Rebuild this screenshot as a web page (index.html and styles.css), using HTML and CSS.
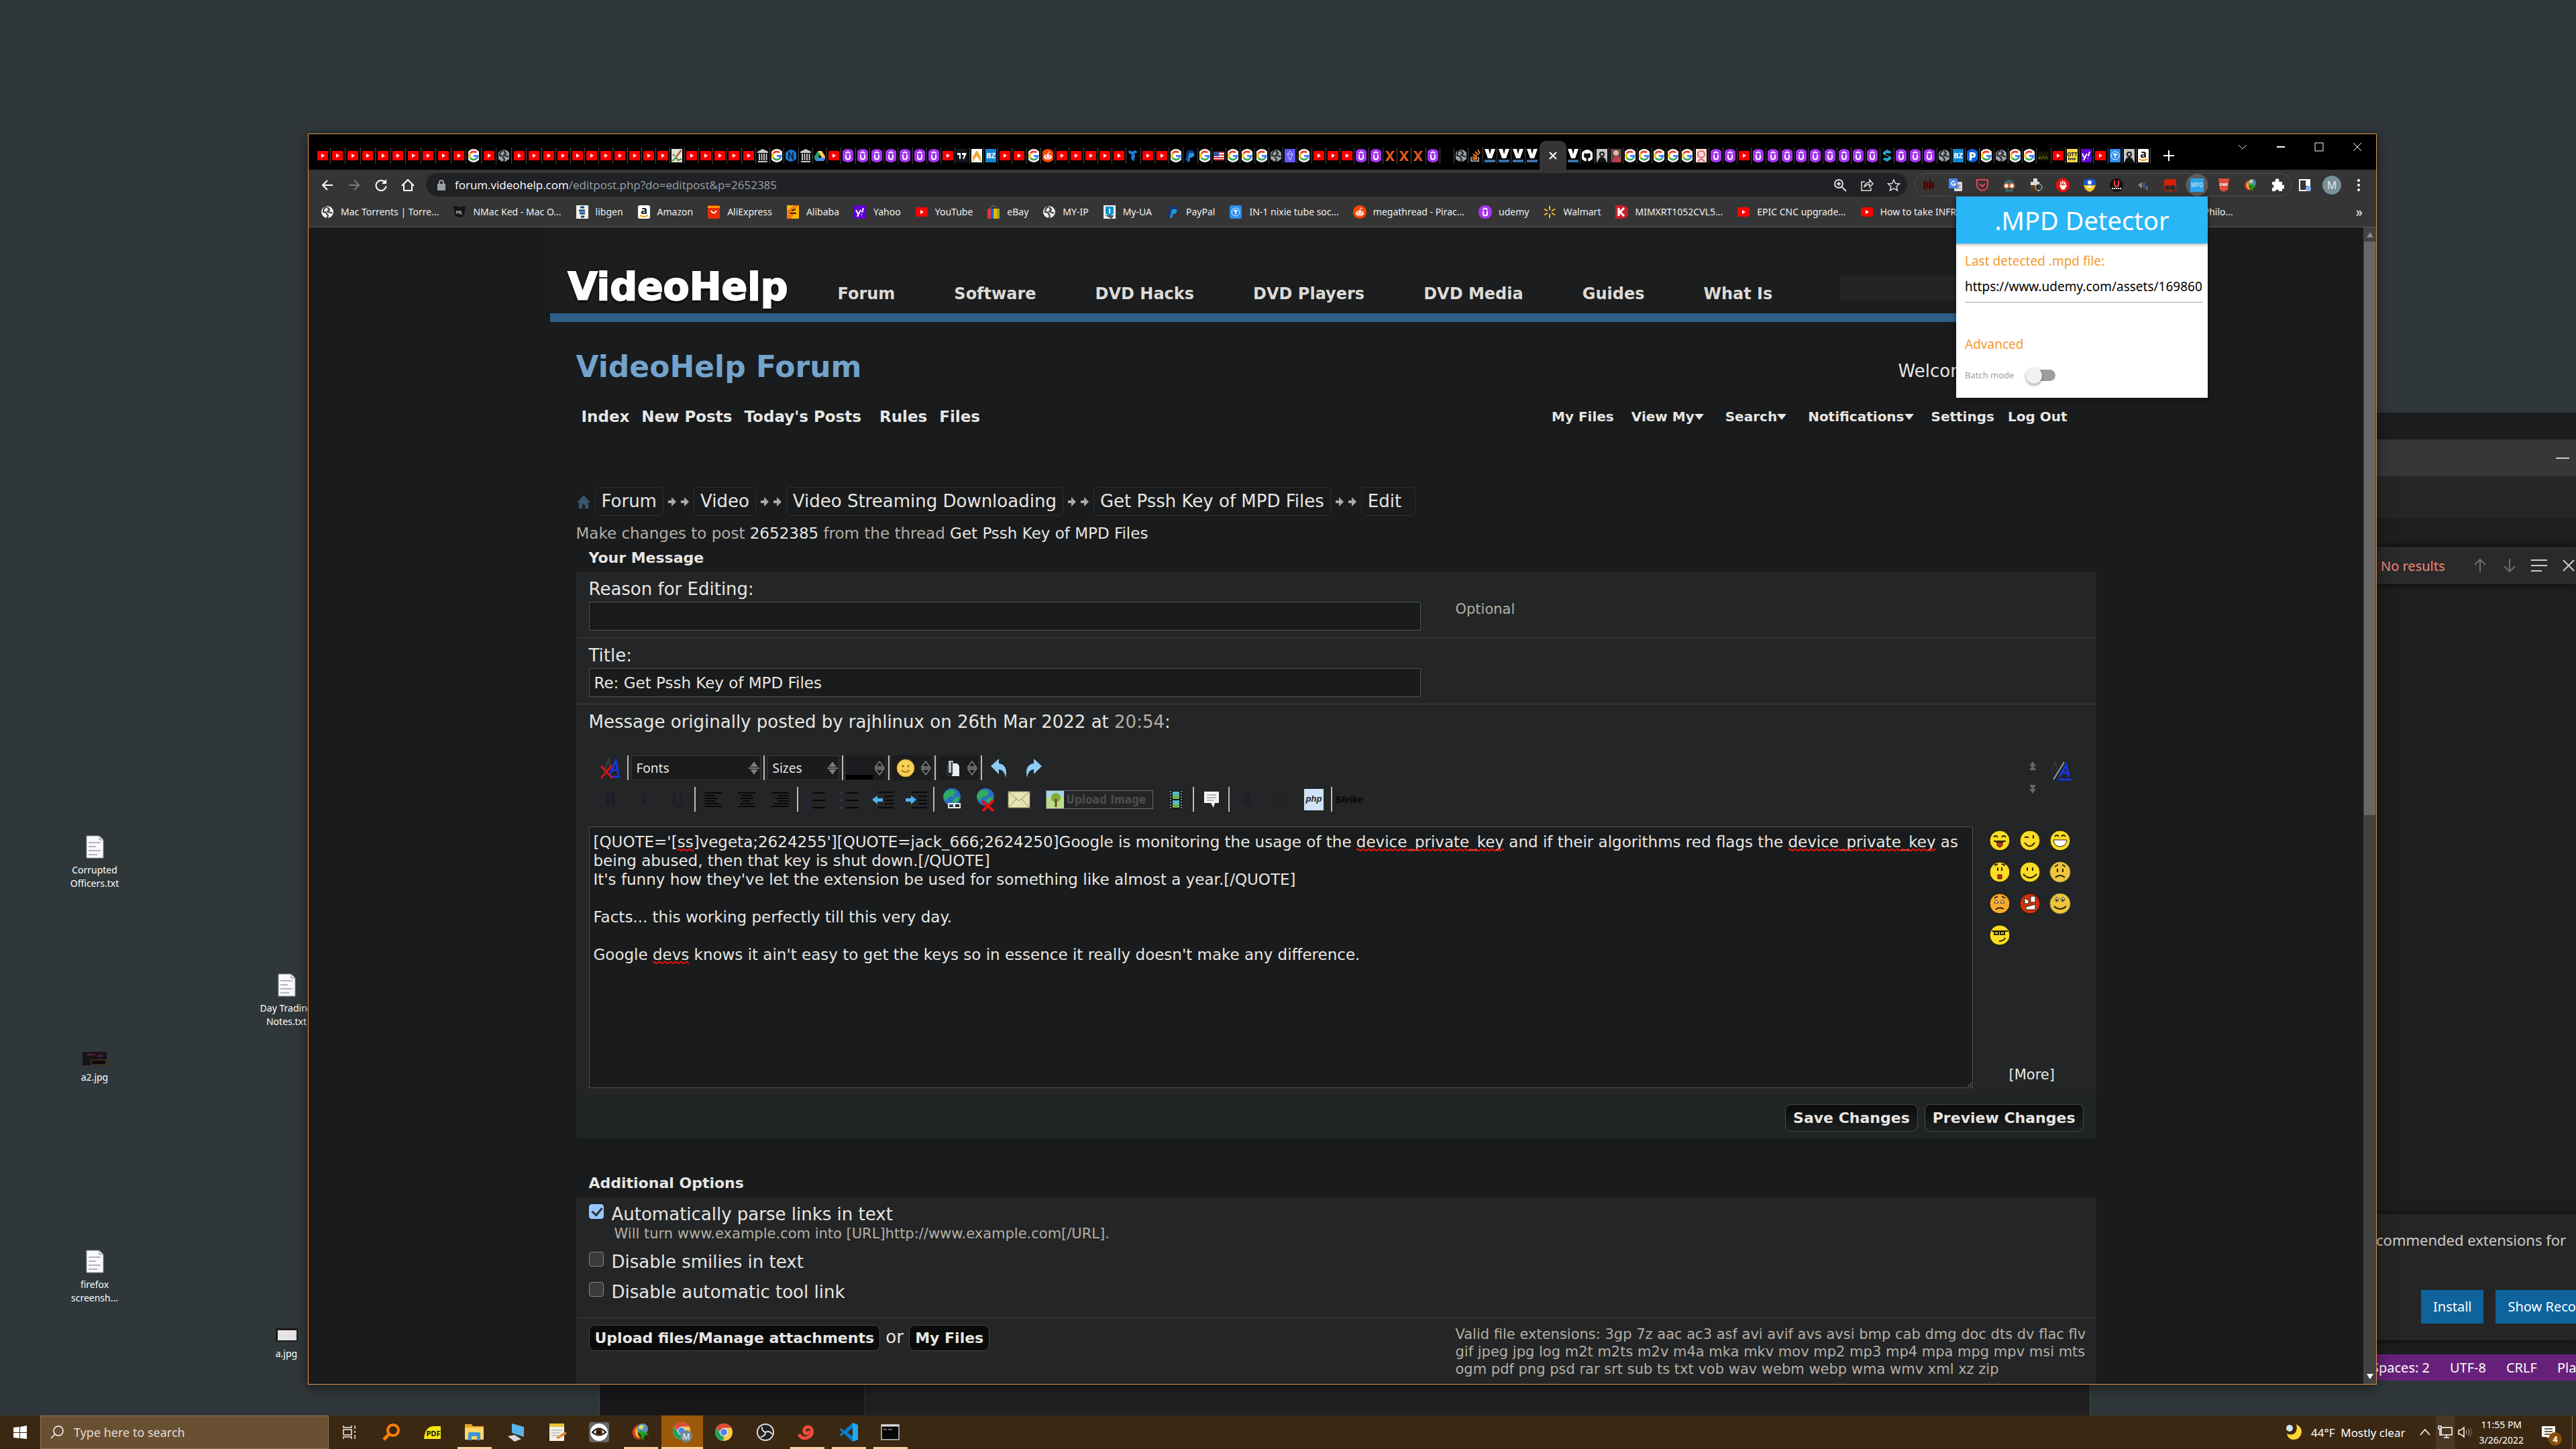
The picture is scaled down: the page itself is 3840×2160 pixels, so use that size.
FILE: index.html
```
<!DOCTYPE html>
<html lang="en">
<head>
    <meta charset="UTF-8">
    <meta name="viewport" content="width=device-width, initial-scale=1.0">
    <title>VideoHelp Forum - Edit Post</title>
    <link rel="stylesheet" href="styles.css">
</head>
<body>
    <!-- icon sheet -->
    <svg class="sprite" aria-hidden="true">
        <symbol id="i-yt" viewBox="0 0 20 20"><rect x="1" y="3" width="18" height="14" rx="3" fill="#f00"/><path d="M8 7l5 3-5 3z" fill="#fff"/></symbol>
        <symbol id="i-g" viewBox="0 0 20 20"><circle cx="10" cy="10" r="10" fill="#fff"/><g fill="none" stroke-width="3"><path d="M5 6.500A6 6 0 0 1 14 5.500" stroke="#ea4335"/><path d="M5 13.500A6 6 0 0 1 5 6.500" stroke="#fbbc05"/><path d="M14 14.500A6 6 0 0 1 5 13.500" stroke="#34a853"/><path d="M10 10.500h6a6 6 0 0 1-2 4" stroke="#4285f4"/></g></symbol>
        <symbol id="i-globe" viewBox="0 0 20 20"><circle cx="10" cy="10" r="9" fill="#9aa0a6"/><path d="M9 2c-3 1-5 4-5 8 3 0 5 1 5 3 0 1 2 1 2 3 0 1-1 2-2 3M11 2c-1 2 0 3 2 4 1 1-2 2-3 3 1 2 5 1 7 3" fill="none" stroke="#202124" stroke-width="2"/></symbol>
        <symbol id="i-globew" viewBox="0 0 20 20"><circle cx="10" cy="10" r="9" fill="#f1f1f1"/><path d="M9 2c-3 1-5 4-5 8 3 0 5 1 5 3 0 1 2 1 2 3 0 1-1 2-2 3M11 2c-1 2 0 3 2 4 1 1-2 2-3 3 1 2 5 1 7 3" fill="none" stroke="#353535" stroke-width="2"/></symbol>
        <symbol id="i-sketch" viewBox="0 0 20 20"><path d="M2 0h16v20H2z" fill="#dfe5cf"/><path d="M3 18l6-5 3 4 5-2M4 8l3 3" stroke="#4b8a3c" stroke-width="2" fill="none"/><path d="M16 1L9 10l-1 3 3-2 6-8z" fill="#c0392b"/></symbol>
        <symbol id="i-trash" viewBox="0 0 20 20"><path d="M2 4l8-4 8 4v2H2zM3 18h14v2H3z" fill="#c9c9c9"/><path d="M5 7v10M8.500 7v10M12 7v10M15.500 7v10" stroke="#c9c9c9" stroke-width="2"/></symbol>
        <symbol id="i-n" viewBox="0 0 20 20"><circle cx="10" cy="10" r="9" fill="#1878d0"/><path d="M7 15V5l6 10V5" stroke="#0b2745" stroke-width="2" fill="none"/></symbol>
        <symbol id="i-drive" viewBox="0 0 20 20"><path d="M7 3h6l-6 11-3 4-3-5z" fill="#1fa463"/><path d="M7 3h6l6 10h-6z" fill="#ffcf48"/><path d="M6 13h13l-3 5H4z" fill="#4688f4"/></symbol>
        <symbol id="i-ud" viewBox="0 0 20 20"><rect width="20" height="20" rx="9" fill="#a435f0"/><path d="M6.500 6.500L10 4.500l3.500 2" stroke="#fff" stroke-width="2" fill="none"/><path d="M7 8.500v4a3 3 0 0 0 6 0v-4" stroke="#fff" stroke-width="2" fill="none"/></symbol>
        <symbol id="i-tv" viewBox="0 0 20 20"><path d="M2 0h16v20H2z" fill="#131722"/><path d="M3 6h5v9H6V9H3zM10 6h7l-4 9h-2l2-6h-3z" fill="#fff"/></symbol>
        <symbol id="i-ay" viewBox="0 0 20 20"><path d="M2 0h16v20H2z" fill="#fff"/><path d="M4 14l6-10 6 10M4 18l6-10 6 10" stroke="#efa52b" stroke-width="2" fill="none"/></symbol>
        <symbol id="i-bz" viewBox="0 0 20 20"><path d="M2 0h16v20H2z" fill="#0f86d3"/><text x="10" y="14" font-size="11" font-weight="700" text-anchor="middle" fill="#fff">BZ</text></symbol>
        <symbol id="i-rd" viewBox="0 0 20 20"><circle cx="10" cy="10" r="10" fill="#ff4500"/><ellipse cx="10" cy="12" rx="6" ry="4" fill="#fff"/><circle cx="7.500" cy="11" r="1.200" fill="#ff4500"/><circle cx="12.500" cy="11" r="1.200" fill="#ff4500"/><path d="M10 8l1-4 3 1" stroke="#fff" fill="none"/><path d="M7.500 14q2.500 1 5 0" stroke="#ff4500" fill="none"/></symbol>
        <symbol id="i-tb" viewBox="0 0 20 20"><path d="M3 2l6 2 4-2 4 3-5 2 1 4-2 8-4-5 1-6-4-1z" fill="#1f7fd6"/></symbol>
        <symbol id="i-pp" viewBox="0 0 20 20"><path d="M6 2h6q4 0 4 4t-5 5H8l-1 6H3z" fill="#113a8c"/><path d="M9 6h6q2 1 1 4-1 3-5 3h-1l-1 6H6z" fill="#1f9bde"/></symbol>
        <symbol id="i-flag" viewBox="0 0 20 20"><path d="M1 4h18v13H1z" fill="#fff"/><path d="M1 5h18M1 9h18M1 13h18M1 16h18" stroke="#d3333c" stroke-width="2"/><path d="M1 4h9v7H1z" fill="#3b4ea0"/></symbol>
        <symbol id="i-dia" viewBox="0 0 20 20"><path d="M2 0h16v20H2z" fill="#6458f5"/><path d="M10 3l4 5-4 9-4-9zM6 8h8" stroke="#d6d2ff" fill="none"/></symbol>
        <symbol id="i-x" viewBox="0 0 20 20"><path d="M3 3h4l3 5 3-5h4l-5 7 5 8h-4l-3-5-3 5H3l5-8z" fill="#e2571e"/></symbol>
        <symbol id="i-so" viewBox="0 0 20 20"><path d="M4 12v6h11v-6" stroke="#9a9a9a" stroke-width="2" fill="none"/><path d="M6 15h7M6 12l7 1M7 8l6 3M10 4l5 5M14 1l3 6" stroke="#f48024" stroke-width="2"/></symbol>
        <symbol id="i-v" viewBox="0 0 20 20"><path d="M2 0h6l2 8 2-8h6l-5 14H7z" fill="#fff"/><path d="M2 16h16v4H2z" fill="#3b73a4"/></symbol>
        <symbol id="i-gh" viewBox="0 0 20 20"><circle cx="10" cy="10" r="9" fill="#fff"/><path d="M6 6l3 1h2l3-1 1 4q0 4-4 4l1 6H8l1-6q-4 0-4-4z" fill="#111"/></symbol>
        <symbol id="i-user" viewBox="0 0 20 20"><path d="M2 0h16v20H2z" fill="#c4c4c4"/><circle cx="10" cy="8" r="4" fill="#111"/><circle cx="10" cy="8" r="2" fill="#c4c4c4"/><path d="M3 20q2-8 7-8t7 8z" fill="#111"/></symbol>
        <symbol id="i-photo" viewBox="0 0 20 20"><path d="M2 0h16v20H2z" fill="#5f4b4a"/><circle cx="10" cy="6" r="4" fill="#e6b8a0"/><path d="M5 20q0-9 6-9t6 9z" fill="#c33c49"/></symbol>
        <symbol id="i-pink" viewBox="0 0 20 20"><path d="M2 0h16v20H2z" fill="#fbdcdc"/><circle cx="10" cy="8" r="5" fill="none" stroke="#d86a6a" stroke-width="2"/><path d="M5 19q5-7 10 0" fill="none" stroke="#d86a6a" stroke-width="2"/></symbol>
        <symbol id="i-s" viewBox="0 0 20 20"><path d="M10 1l7 4-4 2-3-1-3 2 9 4v3l-6 4-7-4 4-2 3 1 3-2-9-4V5z" fill="#2ba8cf"/></symbol>
        <symbol id="i-p" viewBox="0 0 20 20"><circle cx="10" cy="10" r="10" fill="#1463d8"/><path d="M6 17V5h5q4 0 4 4t-4 4H9v4z" fill="#fff"/><circle cx="10.500" cy="9" r="1.500" fill="#1463d8"/></symbol>
        <symbol id="i-game" viewBox="0 0 20 20"><path d="M2 4h16v13H2z" fill="#1b1606"/><path d="M3 15v-3l2 3v-4l3 4 2-5 2 5 3-4 1 4" stroke="#5c7a12" fill="none"/></symbol>
        <symbol id="i-ott" viewBox="0 0 20 20"><path d="M2 0h16v20H2z" fill="#f8d948"/><text x="10" y="11" font-size="8" font-weight="700" text-anchor="middle" fill="#222">OTT</text><path d="M4 15h12" stroke="#222" stroke-width="3" stroke-dasharray="2 1"/></symbol>
        <symbol id="i-yh" viewBox="0 0 20 20"><path d="M1 0h18v20H1z" fill="#6001d2"/><path d="M4 7l3 6M11 7l-5 10" stroke="#fff" stroke-width="2"/><path d="M15 4l-2 7M12 14h1" stroke="#fff" stroke-width="2"/></symbol>
        <symbol id="i-ti" viewBox="0 0 20 20"><rect x="1" width="18" height="20" rx="3" fill="#2b8df2"/><circle cx="10" cy="10" r="6" fill="none" stroke="#fff"/><path d="M7 8h6M10 8v5" stroke="#fff" stroke-width="2"/></symbol>
        <symbol id="i-amz" viewBox="0 0 20 20"><rect x="1" width="18" height="20" rx="3" fill="#fff"/><text x="10" y="13" font-size="16" font-weight="700" text-anchor="middle" fill="#111">a</text><path d="M4 15q6 4 12 0" stroke="#f90" stroke-width="2" fill="none"/></symbol>
        <symbol id="i-nmac" viewBox="0 0 20 20"><circle cx="4" cy="4" r="3" fill="#151515"/><circle cx="16" cy="4" r="3" fill="#151515"/><circle cx="10" cy="10" r="8" fill="#151515"/><path d="M6 13V8l2 3 2-3v5M12 8v5h2" stroke="#ddd" fill="none"/></symbol>
        <symbol id="i-lib" viewBox="0 0 20 20"><path d="M1 0h18v20H1z" fill="#f3f2e6"/><path d="M7 3h6M5 8h9M6 12h8M8 17h5" stroke="#134a8e" stroke-width="3"/></symbol>
        <symbol id="i-ali" viewBox="0 0 20 20"><rect x="1" width="18" height="20" rx="2" fill="#e62e04"/><path d="M1 1h18v3H1z" fill="#f90"/><path d="M6 8q4 7 8 0" stroke="#fff" stroke-width="2" fill="none"/></symbol>
        <symbol id="i-baba" viewBox="0 0 20 20"><path d="M1 0h18v20H1z" fill="#ffb800"/><path d="M1 20V8L12 0h7L8 9l6 1-7 10z" fill="#ff7a00"/><path d="M6 12h9M8 8l6-2" stroke="#222" stroke-width="2"/></symbol>
        <symbol id="i-ebay" viewBox="0 0 20 20"><path d="M6 6q0-5 4-5t4 5" stroke="#555" stroke-width="2" fill="none"/><path d="M1 5h5v15H1z" fill="#e53238"/><path d="M6 5h4v15H6z" fill="#0064d2"/><path d="M10 5h5v15h-5z" fill="#f5af02"/><path d="M15 5h4v15h-4z" fill="#86b817"/></symbol>
        <symbol id="i-ua" viewBox="0 0 20 20"><path d="M1 0h18v20H1z" fill="#f4f4f4"/><path d="M4 2v9q0 4 6 4t6-4V2" fill="#0d94c9"/><path d="M10 5v7" stroke="#fff" stroke-width="2"/><path d="M3 15h14l-4 5z" fill="#555"/></symbol>
        <symbol id="i-wm" viewBox="0 0 20 20"><path d="M10 1v6M10 13v6M2 5.500l5 3M13 11.500l5 3M2 14.500l5-3M13 8.500l5-3" stroke="#ffc220" stroke-width="2"/></symbol>
        <symbol id="i-k" viewBox="0 0 20 20"><path d="M1 0h10a10 10 0 0 1 0 20H1z" fill="#c8202c"/><path d="M6 4v12M14 4l-6 6 6 6" stroke="#fff" stroke-width="3" fill="none"/></symbol>
        <symbol id="i-chrome" viewBox="0 0 28 28"><circle cx="14" cy="14" r="13" fill="#fbc94b"/><path d="M2.700 7.500L9 17l5 3-1 7A13 13 0 0 1 2.700 7.500z" fill="#25a05a"/><path d="M2.700 7.500A13 13 0 0 1 25.300 7.500H14l-6 6z" fill="#db4a3e"/><circle cx="14" cy="14" r="6" fill="#fff"/><circle cx="14" cy="14" r="5" fill="#4a86ee"/></symbol>
        <symbol id="i-idm" viewBox="0 0 28 28"><path d="M12 2Q0 7 2 17q3 9 13 8-9-4-8-11 1-8 5-12z" fill="#e33b22"/><path d="M14 3Q4 8 6 16q2 7 9 7-6-4-5-10 1-6 4-10z" fill="#f2c514"/><circle cx="17" cy="9" r="8" fill="#5f8fb5"/><path d="M12 4q5-2 7 1l-3 5-5-1z" fill="#cfe070"/><path d="M12 11l15 6-7 2-3 8z" fill="#1aa51a"/></symbol>
        <symbol id="i-doc" viewBox="0 0 27 35"><path d="M1 1h19l6 6v27H1z" fill="#fafafa" stroke="#8d8f90"/><path d="M20 1v6h6" fill="#e4e4e4" stroke="#8d8f90"/><path d="M4 11h18M4 17h11M4 23h18M4 29h13" stroke="#b4b6b8" stroke-width="2"/></symbol>
        <symbol id="i-spin" viewBox="0 0 17 22"><path d="M2 9l6-8 6 8zM2 13l6 8 6-8z" fill="none" stroke="#7d7d7d" stroke-width="1.500"/><path d="M1 11h15" stroke="#7d7d7d" stroke-width="1.500"/></symbol>
        <symbol id="i-arrow" viewBox="0 0 14 18"><path d="M1 7h5V2l7 7-7 7v-5H1z" fill="#a9a9a9"/></symbol>
        <symbol id="i-earth" viewBox="0 0 32 36"><circle cx="16" cy="14" r="13" fill="#2b6fc4"/><path d="M8 5q8-4 13 1l-3 7-7 1-4 6q-4-5-4-9zM20 15l7-1q-1 8-7 10l-3-4z" fill="#2fae5b"/></symbol>
    </svg>

    <main class="desktop">
        <div class="shortcut s1"><svg width="27" height="35"><use href="#i-doc"/></svg><span>Corrupted<br>Officers.txt</span></div>
        <div class="shortcut s2"><svg width="27" height="35"><use href="#i-doc"/></svg><span>Day Trading<br>Notes.txt</span></div>
        <div class="shortcut s3"><svg width="38" height="35"><path d="M1 14h36v20H1z" fill="#17141a"/><path d="M8 18h12M24 20h8" stroke="#4a2136" stroke-width="3"/><path d="M14 26h22v7H14z" fill="#0c0c0c" stroke="#6b4a20"/></svg><span>a2.jpg</span></div>
        <div class="shortcut s4"><svg width="27" height="35"><use href="#i-doc"/></svg><span>firefox<br>screensh...</span></div>
        <div class="shortcut s5"><svg width="38" height="35"><path d="M3 14h33v20H3z" fill="#1c1a1a"/><path d="M6 17h28v15H6z" fill="#e6e4e4"/></svg><span>a.jpg</span></div>

        <!-- window that shows only under the browser -->
        <div class="explorer"><div class="explorer-nav"></div></div>

        <section class="vscode">
            <div class="vs-top"></div>
            <div class="vs-title"><svg width="24" height="24"><path d="M2 12h20" stroke="#ccc" stroke-width="2"/></svg></div>
            <div class="vs-menu"></div>
            <div class="vs-tabs"></div>
            <div class="vs-find">
                <span>No results</span>
                <svg width="26" height="26"><path d="M13 23V4M5 12l8-8 8 8" fill="none" stroke="#6d6d6d" stroke-width="2"/></svg>
                <svg width="26" height="26"><path d="M13 3v19M5 14l8 8 8-8" fill="none" stroke="#6d6d6d" stroke-width="2"/></svg>
                <svg width="26" height="26"><path d="M1 5h24M1 13h24M1 21h16" stroke="#ccc" stroke-width="2"/></svg>
                <svg width="26" height="26"><path d="M5 5l16 16M21 5L5 21" stroke="#ccc" stroke-width="2"/></svg>
            </div>
            <div class="vs-editor"></div>
            <div class="vs-notice">
                <p>recommended extensions for</p>
                <div class="vs-actions"><button type="button">Install</button><button type="button">Show Recommendations</button></div>
            </div>
            <div class="vs-status"><span>Spaces: 2</span><span>UTF-8</span><span>CRLF</span><span>Plain Text</span></div>
        </section>

        <section class="browser">
            <div class="tabstrip">
                <div class="tabs tabs-a" id="tabs-a"></div>
                <div class="tabs tabs-b" id="tabs-b"></div>
                <div class="tab-active"><svg width="12" height="12"><path d="M1 1l10 10M11 1L1 11" stroke="#fff" stroke-width="2"/></svg></div>
                <div class="tabs tabs-c" id="tabs-c"></div>
                <button type="button" class="newtab" aria-label="New tab"><svg width="18" height="18"><path d="M9 1v16M1 9h16" stroke="#fff" stroke-width="2"/></svg></button>
                <div class="controls">
                    <button type="button" aria-label="Search tabs"><svg width="14" height="14"><path d="M1 4l6 6 6-6" fill="none" stroke="#ddd"/></svg></button>
                    <button type="button" aria-label="Minimize"><svg width="14" height="14"><path d="M1 7h12" stroke="#fff" stroke-width="2"/></svg></button>
                    <button type="button" aria-label="Maximize"><svg width="14" height="14"><path d="M1 1h12v12H1z" fill="none" stroke="#fff"/></svg></button>
                    <button type="button" aria-label="Close"><svg width="14" height="14"><path d="M1 1l12 12M13 1L1 13" stroke="#fff"/></svg></button>
                </div>
            </div>

            <div class="toolbar">
                <div class="address-row">
                    <button type="button" aria-label="Back"><svg width="20" height="20"><path d="M18 10H3M10 3l-7 7 7 7" fill="none" stroke="#fff" stroke-width="2"/></svg></button>
                    <button type="button" aria-label="Forward"><svg width="20" height="20"><path d="M2 10h15M10 3l7 7-7 7" fill="none" stroke="#7c7c7c" stroke-width="2"/></svg></button>
                    <button type="button" aria-label="Reload"><svg width="20" height="20"><path d="M16 6a7.500 7.500 0 1 0 1.500 5.500" fill="none" stroke="#fff" stroke-width="2"/><path d="M18 1v7h-7z" fill="#fff"/></svg></button>
                    <button type="button" aria-label="Home"><svg width="20" height="20"><path d="M4 9v9h12V9M1 11l9-9 9 9" fill="none" stroke="#fff" stroke-width="2"/></svg></button>
                    <div class="omnibox">
                        <svg width="14" height="18"><path d="M1 7h12v10H1z" fill="#9aa0a6"/><path d="M4 8V5a3 3 0 0 1 6 0v3" fill="none" stroke="#9aa0a6" stroke-width="2"/></svg>
                        <span class="url">forum.videohelp.com<span>/editpost.php?do=editpost&amp;p=2652385</span></span>
                        <svg width="20" height="20"><circle cx="8" cy="8" r="6" fill="none" stroke="#ddd" stroke-width="2"/><path d="M13 13l6 6M5 8h6M8 5v6" stroke="#ddd" stroke-width="2"/></svg>
                        <svg width="20" height="20"><path d="M7 5H2v13h14v-4M6 13q1-7 8-7V2l5 6-5 5v-4q-5 0-8 4z" fill="none" stroke="#ddd" stroke-width="1.500"/></svg>
                        <svg width="20" height="20"><path d="M10 2l2.500 5.500 6 .5-4.500 4 1.500 6-5.500-3.200L4.500 18 6 12 1.500 8l6-.5z" fill="none" stroke="#ddd" stroke-width="1.500"/></svg>
                    </div>
                    <div class="extensions">
                        <span><svg width="20" height="20"><path d="M2 6v8M6 2v16M10 5v10M14 3v14M18 7v6" stroke="#7a0d0d" stroke-width="2"/><path d="M4 4v12M8 6v8M12 2v14M16 6v9" stroke="#111" stroke-width="2"/></svg></span>
                        <span><svg width="20" height="20"><rect x="8" y="5" width="12" height="14" rx="1" fill="#dcdcdc"/><rect width="13" height="15" rx="1" fill="#4a86ee"/><path d="M9 5a3 3 0 1 0 1 3H7" fill="none" stroke="#fff" stroke-width="1.500"/><path d="M12 10h6M15 9v2l-3 5M13 12l5 4" stroke="#666" fill="none"/></svg></span>
                        <span><svg width="20" height="20"><path d="M2 2h16v8a8 8 0 0 1-16 0z" fill="none" stroke="#ef4056" stroke-width="2"/><path d="M6 8l4 4 4-4" fill="none" stroke="#ef4056" stroke-width="2"/></svg></span>
                        <span><svg width="20" height="20"><path d="M2 10a8 8 0 0 1 16 0z" fill="#2d6b7a"/><circle cx="6" cy="11" r="3.500" fill="#fff" stroke="#c76b3c" stroke-width="2"/><circle cx="14" cy="11" r="3.500" fill="#fff" stroke="#c76b3c" stroke-width="2"/><path d="M5 18h10" stroke="#2d8a9a" stroke-width="3" stroke-dasharray="3 1"/></svg></span>
                        <span><svg width="20" height="20"><path d="M6 0h6v5h3v14H2V5h4z" fill="#ddd"/><path d="M2 10h11v9H2z" fill="#5a3b1e"/><circle cx="14" cy="13" r="5" fill="#333" stroke="#ddd"/></svg></span>
                        <span><svg width="20" height="20"><path d="M6 0h8l6 6v8l-6 6H6l-6-6V6z" fill="#e3120b"/><path d="M7 10V5M9.500 9V3M12 9V4M14 11V6M6 11l3 5h3l3-5z" stroke="#fff" stroke-width="1.500" fill="#fff"/></svg></span>
                        <span><svg width="20" height="20"><path d="M1 2l9-2 9 2v8q-2 8-9 10-7-2-9-10z" fill="#1a56c8"/><path d="M1 10h18q-2 8-9 10-7-2-9-10z" fill="#f5c518"/><circle cx="10" cy="6" r="3" fill="#fff"/><path d="M5 14q5-7 10 0z" fill="#fff"/></svg></span>
                        <span><svg width="20" height="20"><circle cx="10" cy="10" r="10" fill="#161010"/><path d="M7 3v6a3 3 0 0 0 6 0V3" fill="none" stroke="#e44" stroke-width="2"/><path d="M3 15h14" stroke="#eee" stroke-width="2" stroke-dasharray="2 1"/></svg></span>
                        <span><svg width="20" height="20"><path d="M2 10l6-5v10z" fill="#888"/><path d="M11 6v8" stroke="#3c6fb0" stroke-width="2"/><path d="M15 11v6" stroke="#666" stroke-width="3"/></svg></span>
                        <span><svg width="20" height="20"><rect x="1" y="1" width="18" height="18" rx="4" fill="#d7200a"/><circle cx="6" cy="14" r="4" fill="#2b2b2b"/><circle cx="14" cy="14" r="4" fill="#2b2b2b"/></svg></span>
                        <span class="on"><svg width="20" height="20"><path d="M0 0h20v20H0z" fill="#29a4ec"/><text x="10" y="13" font-size="8" text-anchor="middle" fill="#d9f0ff">MPD</text></svg></span>
                        <span><svg width="20" height="20"><path d="M2 0h16l-2 17-6 3-6-3z" fill="#dd4b39"/><text x="10" y="11" font-size="6" font-weight="700" text-anchor="middle" fill="#fff">EME</text></svg></span>
                        <span><svg width="20" height="20"><use href="#i-idm"/></svg></span>
                        <span><svg width="20" height="20"><path d="M2 5h5a3 3 0 1 1 5 0h5v5a3 3 0 1 1 0 5v4h-5a2.500 2.500 0 1 0-5 0H2v-5a2.500 2.500 0 1 0 0-5z" fill="#fff"/></svg></span>
                    </div>
                    <button type="button" aria-label="Side panel"><svg width="20" height="20"><path d="M2 2h15v16H2z" fill="none" stroke="#fff" stroke-width="2"/><path d="M11 2h6v9h-6z" fill="#fff"/><circle cx="15" cy="15" r="4" fill="#8ab4f8"/></svg></button>
                    <span class="avatar">M</span>
                    <button type="button" aria-label="Menu"><svg width="20" height="20"><circle cx="10" cy="3" r="2" fill="#fff"/><circle cx="10" cy="10" r="2" fill="#fff"/><circle cx="10" cy="17" r="2" fill="#fff"/></svg></button>
                </div>
                <nav class="bookmarks">
                    <a href="#"><svg width="20" height="20"><use href="#i-globew"/></svg>Mac Torrents | Torre...</a>
                    <a href="#"><svg width="20" height="20"><use href="#i-nmac"/></svg>NMac Ked - Mac O...</a>
                    <a href="#"><svg width="20" height="20"><use href="#i-lib"/></svg>libgen</a>
                    <a href="#"><svg width="20" height="20"><use href="#i-amz"/></svg>Amazon</a>
                    <a href="#"><svg width="20" height="20"><use href="#i-ali"/></svg>AliExpress</a>
                    <a href="#"><svg width="20" height="20"><use href="#i-baba"/></svg>Alibaba</a>
                    <a href="#"><svg width="20" height="20"><use href="#i-yh"/></svg>Yahoo</a>
                    <a href="#"><svg width="20" height="20"><use href="#i-yt"/></svg>YouTube</a>
                    <a href="#"><svg width="20" height="20"><use href="#i-ebay"/></svg>eBay</a>
                    <a href="#"><svg width="20" height="20"><use href="#i-globew"/></svg>MY-IP</a>
                    <a href="#"><svg width="20" height="20"><use href="#i-ua"/></svg>My-UA</a>
                    <a href="#"><svg width="20" height="20"><use href="#i-pp"/></svg>PayPal</a>
                    <a href="#"><svg width="20" height="20"><use href="#i-ti"/></svg>IN-1 nixie tube soc...</a>
                    <a href="#"><svg width="20" height="20"><use href="#i-rd"/></svg>megathread - Pirac...</a>
                    <a href="#"><svg width="20" height="20"><use href="#i-ud"/></svg>udemy</a>
                    <a href="#"><svg width="20" height="20"><use href="#i-wm"/></svg>Walmart</a>
                    <a href="#"><svg width="20" height="20"><use href="#i-k"/></svg>MIMXRT1052CVL5...</a>
                    <a href="#"><svg width="20" height="20"><use href="#i-yt"/></svg>EPIC CNC upgrade...</a>
                    <a href="#"><svg width="20" height="20"><use href="#i-yt"/></svg>How to take INFR...</a>
                    <a href="#" class="last">Philo...</a>
                    <button type="button">»</button>
                </nav>
            </div>

            <div class="viewport">
                <div class="page">
                    <header class="site-header">
                        <a href="#" class="logo">VideoHelp</a>
                        <nav>
                            <a href="#">Forum</a>
                            <a href="#">Software</a>
                            <a href="#">DVD Hacks</a>
                            <a href="#">DVD Players</a>
                            <a href="#">DVD Media</a>
                            <a href="#">Guides</a>
                            <a href="#">What Is</a>
                        </nav>
                        <input type="search" aria-label="Search site">
                    </header>

                    <div class="content">
                        <div class="title-row">
                            <h1>VideoHelp Forum</h1>
                            <span>Welcome</span>
                        </div>
                        <div class="nav-row">
                            <nav class="nav-left">
                                <a href="#">Index</a>
                                <a href="#">New Posts</a>
                                <a href="#">Today's Posts</a>
                                <a href="#" class="split">Rules</a>
                                <a href="#">Files</a>
                            </nav>
                            <nav class="nav-right">
                                <a href="#">My Files</a>
                                <a href="#" class="menu">View My</a>
                                <a href="#" class="menu">Search</a>
                                <a href="#" class="menu">Notifications</a>
                                <a href="#">Settings</a>
                                <a href="#">Log Out</a>
                            </nav>
                        </div>

                        <nav class="breadcrumb">
                            <svg width="22" height="22"><path d="M11 1L1 12h3v9h5v-6h4v6h5v-9h3z" fill="#3a566c"/></svg>
                            <a href="#">Forum</a>
                            <i><svg width="14" height="18"><use href="#i-arrow"/></svg><svg width="14" height="18"><use href="#i-arrow"/></svg></i>
                            <a href="#">Video</a>
                            <i><svg width="14" height="18"><use href="#i-arrow"/></svg><svg width="14" height="18"><use href="#i-arrow"/></svg></i>
                            <a href="#">Video Streaming Downloading</a>
                            <i><svg width="14" height="18"><use href="#i-arrow"/></svg><svg width="14" height="18"><use href="#i-arrow"/></svg></i>
                            <a href="#">Get Pssh Key of MPD Files</a>
                            <i><svg width="14" height="18"><use href="#i-arrow"/></svg><svg width="14" height="18"><use href="#i-arrow"/></svg></i>
                            <span>Edit</span>
                        </nav>
                        <p class="intro">Make changes to post <a href="#">2652385</a> from the thread <a href="#">Get Pssh Key of MPD Files</a></p>

                        <form>
                            <h2>Your Message</h2>
                            <div class="panel">
                                <div class="row">
                                    <div class="field">
                                        <label for="reason">Reason for Editing:</label>
                                        <input type="text" id="reason">
                                    </div>
                                    <p class="hint">Optional</p>
                                </div>
                                <div class="row">
                                    <div class="field">
                                        <label for="title">Title:</label>
                                        <input type="text" id="title" value="Re: Get Pssh Key of MPD Files">
                                    </div>
                                </div>
                                <div class="row editor">
                                    <label for="message">Message originally posted by rajhlinux on 26th Mar 2022 at <em>20:54</em>:</label>
                                    <div class="tools">
                                        <div class="tools-main">
                                            <div class="tool-row">
                                                <button type="button" aria-label="Remove formatting"><svg width="34" height="34"><path d="M8 20l6-16 5 16" fill="none" stroke="#38393c" stroke-width="3"/><path d="M16 27l9-21 4 21M20 20h9M16 30h15" fill="none" stroke="#1536e0" stroke-width="3"/><path d="M3 14l17 18M19 13L3 32" stroke="#d01515" stroke-width="3"/></svg></button>
                                                <i></i>
                                                <select class="fonts" aria-label="Fonts"><option>Fonts</option></select>
                                                <i></i>
                                                <select class="sizes" aria-label="Sizes"><option>Sizes</option></select>
                                                <i></i>
                                                <button type="button" class="drop" aria-label="Text colour"><svg width="40" height="36"><path d="M14 24l7-16 7 16M17 19h8" fill="none" stroke="#1d1e2c" stroke-width="2"/><path d="M0 28h40v7H0z" fill="#000"/></svg><svg width="17" height="22"><use href="#i-spin"/></svg></button>
                                                <i></i>
                                                <button type="button" class="drop" aria-label="Smilies"><svg width="36" height="30"><circle cx="20" cy="15" r="13" fill="#f7cf55" stroke="#c98d20"/><circle cx="16" cy="12" r="1.500" fill="#7a5510"/><circle cx="24" cy="12" r="1.500" fill="#7a5510"/><path d="M14 18q6 6 12 0" fill="none" stroke="#a8741a" stroke-width="2"/></svg><svg width="17" height="22"><use href="#i-spin"/></svg></button>
                                                <i></i>
                                                <button type="button" class="drop" aria-label="Attachments"><svg width="36" height="30"><path d="M15 4h7v18h-7z" fill="#b9bbbd"/><path d="M20 8h8l3 4v15H20z" fill="#e9eef4"/><path d="M13 10v14a4 4 0 0 0 7 0V6" fill="none" stroke="#333" stroke-width="2"/></svg><svg width="17" height="22"><use href="#i-spin"/></svg></button>
                                                <i></i>
                                                <button type="button" aria-label="Undo"><svg width="28" height="34"><path d="M13 3v7q14 2 10 21-2-12-10-12v7L1 14z" fill="#8ecbf5"/></svg></button>
                                                <button type="button" aria-label="Redo"><svg width="28" height="34"><path d="M15 3v7Q1 12 5 31 7 19 15 19v7l12-12z" fill="#8ecbf5"/></svg></button>
                                            </div>
                                            <div class="tool-row">
                                                <button type="button" class="letter">B</button>
                                                <button type="button" class="letter it">I</button>
                                                <button type="button" class="letter un">U</button>
                                                <i></i>
                                                <button type="button" aria-label="Align left"><svg width="28" height="24"><path d="M1 2h26M1 6h16M1 10h20M1 14h16M1 18h22M1 22h26" stroke="#08080a" stroke-width="2"/></svg></button>
                                                <button type="button" aria-label="Align centre"><svg width="28" height="24"><path d="M1 2h26M6 6h16M4 10h20M8 14h12M4 18h20M1 22h26" stroke="#08080a" stroke-width="2"/></svg></button>
                                                <button type="button" aria-label="Align right"><svg width="28" height="24"><path d="M1 2h26M11 6h16M7 10h20M11 14h16M5 18h22M1 22h26" stroke="#08080a" stroke-width="2"/></svg></button>
                                                <i></i>
                                                <button type="button" aria-label="Numbered list"><svg width="30" height="30"><path d="M10 5h19M10 16h19M10 27h19" stroke="#08080a" stroke-width="2"/><path d="M3 2v6M2 13h3v3H2v3h3M2 24h3v5H2" fill="none" stroke="#26274a" stroke-width="2"/></svg></button>
                                                <button type="button" aria-label="Bullet list"><svg width="30" height="30"><path d="M10 5h19M10 16h19M10 27h19" stroke="#08080a" stroke-width="2"/><path d="M3 3v4M3 14v4M3 25v4" stroke="#34355c" stroke-width="3"/></svg></button>
                                                <button type="button" aria-label="Outdent"><svg width="34" height="28"><path d="M10 3h23M20 9h13M20 15h13M20 20h13M10 26h23" stroke="#08080a" stroke-width="2"/><path d="M1 14l8-6v4h8v5H9v4z" fill="#4fb4ef"/></svg></button>
                                                <button type="button" aria-label="Indent"><svg width="34" height="28"><path d="M10 3h23M20 9h13M20 15h13M20 20h13M10 26h23" stroke="#08080a" stroke-width="2"/><path d="M17 14l-8-6v4H1v5h8v4z" fill="#4fb4ef"/></svg></button>
                                                <i></i>
                                                <button type="button" aria-label="Link"><svg width="32" height="36"><use href="#i-earth"/><path d="M11 24h8v6h-8zM20 24h8v6h-8z" fill="none" stroke="#e8e8e8" stroke-width="2"/></svg></button>
                                                <button type="button" aria-label="Unlink"><svg width="32" height="36"><use href="#i-earth"/><path d="M11 20l17 15M28 19L12 35" stroke="#e01010" stroke-width="4"/></svg></button>
                                                <button type="button" aria-label="Email"><svg width="34" height="26"><path d="M1 1h32v24H1z" fill="#e6e3b4" stroke="#8c8a60"/><path d="M1 1l16 14L33 1M1 25l12-13M33 25L21 12" fill="none" stroke="#8c8a60"/></svg></button>
                                                <button type="button" class="upload"><svg width="26" height="26"><path d="M0 0h26v26H0z" fill="#b9dc8e"/><path d="M0 0h26v9H0z" fill="#a8d4ea"/><circle cx="14" cy="10" r="7" fill="#7fae35"/><path d="M14 12v12" stroke="#6b4a20" stroke-width="3"/></svg><span>Upload Image</span></button>
                                                <button type="button" aria-label="Video"><svg width="20" height="28"><path d="M0 0h20v28H0z" fill="#15181a"/><path d="M5 2h10v11H5zM5 15h10v11H5z" fill="#56b7c8"/><path d="M5 8h10v5H5zM5 21h10v5H5z" fill="#6fb24c"/><path d="M2 1v26M18 1v26" stroke="#8d8d8d" stroke-width="2" stroke-dasharray="2 2"/></svg></button>
                                                <i></i>
                                                <button type="button" aria-label="Quote"><svg width="28" height="28"><path d="M3 2h22v17h-6l-2 7-4-7H3z" fill="#f4f4f4"/><path d="M7 7h14M7 11h14M7 15h10" stroke="#b9b9b9" stroke-width="2"/></svg></button>
                                                <i></i>
                                                <button type="button" class="letter">#</button>
                                                <button type="button" class="letter dim">&lt;&gt;</button>
                                                <button type="button" class="php"><span>php</span></button>
                                                <i></i>
                                                <button type="button" class="strike">Strike</button>
                                            </div>
                                        </div>
                                        <div class="tools-side">
                                            <svg width="14" height="50"><path d="M7 1l5 7H2zM7 7l5 7H2zM7 49l5-7H2zM7 43l5-7H2z" fill="#66686b"/></svg>
                                            <svg width="32" height="30"><path d="M2 13L6 2l4 11" fill="none" stroke="#38393c" stroke-width="2"/><path d="M4 28L20 2" stroke="#999" stroke-width="2"/><path d="M13 24l10-18 4 18M17 18h9M11 28h20" fill="none" stroke="#1536e0" stroke-width="3"/></svg>
                                        </div>
                                    </div>
                                    <div class="compose">
                                        <div class="text-box">
                                            <textarea id="message" spellcheck="false">[QUOTE='[ss]vegeta;2624255'][QUOTE=jack_666;2624250]Google is monitoring the usage of the device_private_key and if their algorithms red flags the device_private_key as
being abused, then that key is shut down.[/QUOTE]
It's funny how they've let the extension be used for something like almost a year.[/QUOTE]

Facts... this working perfectly till this very day.

Google devs knows it ain't easy to get the keys so in essence it really doesn't make any difference.</textarea>
                                            <div class="spell" id="spell"></div>
                                        </div>
                                        <div class="smilies">
                                            <div class="smiley-grid">
                                                <svg viewBox="0 0 32 32"><circle cx="16" cy="16" r="15"/><path d="M7 11q3-4 6 0M19 11q3-4 6 0M7 17h18M10 17q6 5 12 0"/><path d="M12 19h8v4q-4 6-8 0z" class="red"/></svg>
                                                <svg viewBox="0 0 32 32"><circle cx="16" cy="16" r="15"/><path d="M8 11h6M21 8v5M8 19q8 11 15 0"/></svg>
                                                <svg viewBox="0 0 32 32"><circle cx="16" cy="16" r="15"/><path d="M8 10q3-4 6 0M18 10q3-4 6 0"/><path d="M6 15h20q-1 10-10 10T6 15z" class="white"/></svg>
                                                <svg viewBox="0 0 32 32"><circle cx="16" cy="16" r="15"/><path d="M8 6l5-2M24 6l-5-2M13 9v5M19 9v5"/><path d="M13 20h6v6h-6z" class="red"/></svg>
                                                <svg viewBox="0 0 32 32"><circle cx="16" cy="16" r="15"/><path d="M12 9v5M20 9v5M6 19q10 11 20 0"/></svg>
                                                <svg viewBox="0 0 32 32" class="soft"><circle cx="16" cy="16" r="15"/><path d="M8 8l5-3M24 8l-5-3M12 11v5M20 11v5M9 24q7-6 14 0"/></svg>
                                                <svg viewBox="0 0 32 32" class="orange"><circle cx="16" cy="16" r="15"/><path d="M8 8l5-3M24 8l-5-3"/><path d="M8 15q3-8 6 0zM17 15q3-8 6 0z" class="white"/><path d="M10 25q5-5 12-1"/></svg>
                                                <svg viewBox="0 0 32 32" class="mad"><circle cx="16" cy="16" r="15"/><path d="M8 8l6 3v5H8zM17 5h7v9h-7zM10 21l14-4v8H10z" class="white"/></svg>
                                                <svg viewBox="0 0 32 32" class="soft"><circle cx="16" cy="16" r="15"/><path d="M8 10q3-7 6 0-3 6-6 0zM17 10q3-7 6 0-3 6-6 0z" class="white"/><path d="M7 20q9 8 18 0M11 9v3M20 9v3"/></svg>
                                                <svg viewBox="0 0 32 32"><circle cx="16" cy="16" r="15"/><path d="M4 10h24M8 11h6v4H8zM17 11h6v4h-6zM15 25q7 0 9-5"/></svg>
                                            </div>
                                            <a href="#">[More]</a>
                                        </div>
                                    </div>
                                </div>
                                <div class="actions">
                                    <button type="submit">Save Changes</button>
                                    <button type="button">Preview Changes</button>
                                </div>
                            </div>

                            <h2 class="extra">Additional Options</h2>
                            <div class="panel">
                                <div class="row options">
                                    <label for="parse"><input type="checkbox" id="parse" checked>Automatically parse links in text</label>
                                    <p>Will turn www.example.com into [URL]http://www.example.com[/URL].</p>
                                    <label for="nosmilies"><input type="checkbox" id="nosmilies">Disable smilies in text</label>
                                    <label for="nolink"><input type="checkbox" id="nolink">Disable automatic tool link</label>
                                </div>
                                <div class="row uploads">
                                    <div class="field"><button type="button">Upload files/Manage attachments</button> or <button type="button">My Files</button></div>
                                    <p class="hint">Valid file extensions: 3gp 7z aac ac3 asf avi avif avs avsi bmp cab dmg doc dts dv flac flv<br>gif jpeg jpg log m2t m2ts m2v m4a mka mkv mov mp2 mp3 mp4 mpa mpg mpv msi mts<br>ogm pdf png psd rar srt sub ts txt vob wav webm webp wma wmv xml xz zip</p>
                                </div>
                            </div>
                        </form>
                    </div>
                </div>
                <div class="scrollbar"><svg width="10" height="8"><path d="M5 0l5 8H0z" fill="#8c8c8c"/></svg><div class="thumb"></div><svg width="10" height="8"><path d="M0 0h10L5 8z" fill="#fff"/></svg></div>
            </div>

            <aside class="popup">
                <h3>.MPD Detector</h3>
                <div class="popup-body">
                    <label for="mpd" class="caption">Last detected .mpd file:</label>
                    <input type="text" id="mpd" value="https://www.udemy.com/assets/169860">
                    <p class="caption advanced">Advanced</p>
                    <label class="batch" for="batch">Batch mode<input type="checkbox" id="batch"></label>
                </div>
            </aside>
        </section>
    </main>

    <footer class="taskbar">
        <button type="button" class="start" aria-label="Start"><svg width="20" height="20"><path d="M0 3l9-1v8H0zM10 2l10-2v10H10zM0 11h9v8l-9-1zM10 11h10v9l-10-1z" fill="#fff"/></svg></button>
        <div class="search"><svg width="20" height="20"><circle cx="12" cy="8" r="7" fill="none" stroke="#fff" stroke-width="1.500"/><path d="M7 13l-6 6" stroke="#fff" stroke-width="1.500"/></svg><input type="text" placeholder="Type here to search" aria-label="Search"></div>
        <div class="apps">
            <button type="button" aria-label="Task view"><svg width="20" height="22"><path d="M1 1v3h12V1M1 21v-3h12v3M1 7h12v8H1zM18 1v5M18 9v3M18 15v6" fill="none" stroke="#eee" stroke-width="1.500"/></svg></button>
            <button type="button" aria-label="Everything"><svg width="28" height="28"><circle cx="17" cy="11" r="8" fill="none" stroke="#ff7f00" stroke-width="4"/><path d="M11 17l-8 8" stroke="#ff7f00" stroke-width="5"/></svg></button>
            <button type="button" aria-label="PDF"><svg width="28" height="22"><path d="M1 21Q2 4 14 2h12v19z" fill="#f7e511"/><text x="15" y="17" font-size="11" font-weight="700" text-anchor="middle" fill="#111">PDF</text></svg></button>
            <button type="button" class="open" aria-label="Explorer"><svg width="28" height="26"><path d="M0 1h10l2 3h16v20H0z" fill="#e5a823"/><path d="M0 6h28v18H0z" fill="#fdd568"/><path d="M5 25v-9q0-3 3-3h12q3 0 3 3v9h-5v-6h-8v6z" fill="#3c95d4"/></svg></button>
            <button type="button" aria-label="Remote"><svg width="28" height="28"><path d="M8 1l18 5v15L8 15z" fill="#55b4ee"/><path d="M2 20l10-2 10 6-10 4z" fill="#d7dbdf"/></svg></button>
            <button type="button" aria-label="Notepad"><svg width="28" height="28"><path d="M2 3h22v24H2z" fill="#f0efe9"/><path d="M2 1h22v5H2z" fill="#e5c62f"/><path d="M5 11h16M5 15h12M5 19h10" stroke="#999"/><path d="M12 22l13-9 3 3-13 8z" fill="#df8a2d"/></svg></button>
            <button type="button" aria-label="Viewer"><svg width="30" height="30"><rect width="30" height="30" rx="4" fill="#666"/><circle cx="15" cy="15" r="13" fill="#fff"/><path d="M5 15q10-11 20 0-10 9-20 0z" fill="#fff" stroke="#111" stroke-width="2"/><circle cx="15" cy="15" r="5" fill="#5a2410"/><circle cx="15" cy="15" r="2" fill="#000"/></svg></button>
            <button type="button" class="open" aria-label="Download manager"><svg width="28" height="28"><use href="#i-idm"/></svg></button>
            <button type="button" class="open active" aria-label="Chrome profile"><svg width="30" height="32"><use href="#i-chrome" width="28" height="28"/><circle cx="21" cy="22" r="9" fill="#6f8a96"/><text x="21" y="27" font-size="12" text-anchor="middle" fill="#fff">M</text></svg></button>
            <button type="button" aria-label="Chrome"><svg width="28" height="28"><use href="#i-chrome"/></svg></button>
            <button type="button" aria-label="OBS"><svg width="28" height="28"><circle cx="14" cy="14" r="12" fill="#222" stroke="#ddd" stroke-width="2"/><path d="M14 14q-6-2-5-8M14 14q6-3 10 3M14 14q0 6-7 7" fill="none" stroke="#ddd" stroke-width="2"/></svg></button>
            <button type="button" class="open" aria-label="Spiral"><svg width="28" height="28"><path d="M2 17q4 8 13 5 8-4 6-12-3-6-9-3-5 5 0 9 5 0 4-4" fill="none" stroke="#ef4a3b" stroke-width="5"/></svg></button>
            <button type="button" class="open" aria-label="VS Code"><svg width="30" height="30"><path d="M21 1l8 3v22l-8 3L8 17l-4 4-3-2 5-4-5-4 3-2 4 4z" fill="#0a7ecb"/><path d="M21 9v12l-8-6z" fill="#3c2811"/><path d="M21 1l8 3v22l-8 3z" fill="#25a7f0"/></svg></button>
            <button type="button" class="open" aria-label="Terminal"><svg width="28" height="24"><path d="M1 1h26v22H1z" fill="#050505" stroke="#9b9b9b" stroke-width="2"/><path d="M1 2h26" stroke="#ddd" stroke-width="3"/><path d="M4 8h5M11 8h6" stroke="#ccc"/></svg></button>
        </div>
        <div class="tray">
            <svg class="moon" width="26" height="26"><path d="M16 1q9 5 8 13-3 11-14 10-7-2-8-9 9 4 13-2 3-5 1-12z" fill="#fdd835"/><circle cx="6" cy="7" r="5" fill="#cfe6f5"/></svg>
            <span class="weather">44°F&nbsp; Mostly clear</span>
            <svg class="caret" width="16" height="12"><path d="M1 10l7-8 7 8" fill="none" stroke="#fff" stroke-width="1.500"/></svg>
            <span class="net"><svg width="22" height="20"><path d="M5 3h16v11H5zM9 18h8M13 14v4M1 1h4v4H1zM3 5v9h2" fill="none" stroke="#fff" stroke-width="1.500"/></svg></span>
            <svg class="sound" width="22" height="20"><path d="M1 7h3l5-4v14l-5-4H1z" fill="none" stroke="#fff" stroke-width="1.500"/><path d="M12 7q2 3 0 6M15 5q4 5 0 10" fill="none" stroke="#ccc"/><path d="M18 3q5 7 0 14" fill="none" stroke="#777"/></svg>
            <div class="clock"><span>11:55 PM</span><span>3/26/2022</span></div>
            <div class="notes"><svg width="20" height="18"><path d="M0 0h20v16h-8l-4 2v-2H0z" fill="#fff"/><path d="M4 4h12M4 8h12M4 12h12" stroke="#3c2811" stroke-width="1.500"/></svg><b>4</b></div>
        </div>
    </footer>

    <script src="script.js"></script>
</body>
</html>
```
FILE: styles.css
```
* {
    box-sizing: border-box;
}
body {
    margin: 0;
    height: 100vh;
    display: flex;
    flex-direction: column;
    overflow: hidden;
    font-family: 'Noto Sans', 'Open Sans', sans-serif;
    background-color: #30373a;
    color: #e8e6e3;
}
h1, h2, h3, p {
    margin: 0;
}
a {
    color: inherit;
    text-decoration: none;
}
button {
    margin: 0;
    padding: 0;
    border: none;
    background: none;
    font: inherit;
    color: inherit;
}
svg {
    display: block;
    flex: none;
}
.sprite {
    display: none;
}

/* desktop */
.desktop {
    position: relative;
    flex: 1;
    overflow: hidden;
}
.shortcut {
    position: absolute;
    width: 110px;
    display: flex;
    flex-direction: column;
    align-items: center;
    gap: 7px;
    font-size: 14px;
    line-height: 20px;
    text-align: center;
    color: #fff;
}
.s1 { left: 86px; top: 1245px; }
.s2 { left: 372px; top: 1451px; }
.s3 { left: 86px; top: 1554px; }
.s4 { left: 86px; top: 1863px; }
.s5 { left: 372px; top: 1966px; }
.explorer {
    position: absolute;
    left: 893px;
    right: 724px;
    bottom: 0;
    height: 100px;
    background-color: #202020;
    border: 1px solid #42484b;
    border-width: 0 1px;
}
.explorer-nav {
    width: 395px;
    height: 100%;
    background-color: #181818;
    border-right: 1px solid #2b2b2b;
}

/* vs code */
.vscode {
    position: absolute;
    right: 0;
    top: 615px;
    bottom: 52px;
    width: 420px;
    display: flex;
    flex-direction: column;
    overflow: hidden;
    background-color: #1e1e1e;
}
.vs-top {
    height: 40px;
    background-color: #1c1d1f;
}
.vs-title {
    height: 55px;
    display: flex;
    align-items: center;
    justify-content: flex-end;
    padding: 0 8px;
    background-color: #37373a;
}
.vs-menu {
    height: 63px;
    background-color: #252526;
}
.vs-tabs {
    height: 42px;
}
.vs-find {
    height: 56px;
    display: flex;
    align-items: center;
    gap: 18px;
    padding-left: 129px;
    font-size: 20px;
    white-space: nowrap;
    color: #f48771;
    background-color: #2a2a2d;
    box-shadow: 0 0 8px #000;
}
.vs-find span {
    margin-right: 21px;
}
.vs-editor {
    flex: 1;
}
.vs-notice {
    margin-bottom: 21px;
    height: 189px;
    padding: 23px 0 0 101px;
    background-color: #252526;
    box-shadow: 0 0 8px #000;
    color: #ccc;
    font-size: 22px;
    line-height: 32px;
    white-space: nowrap;
}
.vs-actions {
    display: flex;
    gap: 18px;
    margin: 59px 0 0 88px;
}
.vs-actions button {
    height: 50px;
    padding: 0 18px;
    background-color: #0e639c;
    color: #fff;
    font-size: 20px;
}
.vs-status {
    height: 39px;
    display: flex;
    align-items: center;
    gap: 30px;
    padding-left: 115px;
    background-color: #68217a;
    color: #fff;
    font-size: 20px;
    white-space: nowrap;
}

/* browser */
.browser {
    position: absolute;
    left: 459px;
    right: 297px;
    top: 199px;
    bottom: 46px;
    display: flex;
    flex-direction: column;
    border: 1px solid #dc9548;
    background-color: #353535;
    box-shadow: 0 4px 20px rgba(0, 0, 0, 0.5);
}
.tabstrip {
    height: 53px;
    display: flex;
    padding-left: 10px;
    background-color: #000;
}
.tabs {
    display: flex;
    align-items: center;
    padding-top: 11px;
}
.tabs-a { width: 338px; }
.tabs-b { width: 1487px; }
.tabs-c { width: 871px; }
.tab {
    flex: 1;
    height: 24px;
    display: flex;
    align-items: center;
    justify-content: center;
    border-right: 1px solid #4d4d4d;
}
.tab-active {
    width: 40px;
    margin-top: 10px;
    display: flex;
    align-items: center;
    justify-content: center;
    border-radius: 9px 9px 0 0;
    background-color: #353535;
}
.newtab {
    width: 56px;
    padding: 11px 0 0 18px;
}
.controls {
    flex: 1;
    display: flex;
    justify-content: flex-end;
    padding-bottom: 15px;
}
.controls button {
    width: 57px;
    display: flex;
    align-items: center;
    justify-content: center;
}
.toolbar {
    height: 86px;
    border-bottom: 1px solid #5c5c5c;
}
.address-row {
    height: 40px;
    display: flex;
    align-items: center;
    padding: 5px 6px 0 8px;
}
.address-row > button {
    width: 40px;
    height: 35px;
    display: flex;
    align-items: center;
    justify-content: center;
}
.omnibox {
    flex: 1;
    height: 35px;
    margin: 0 11px 0 7px;
    display: flex;
    align-items: center;
    gap: 20px;
    padding: 0 10px 0 16px;
    border-radius: 18px;
    background-color: #202124;
}
.url {
    flex: 1;
    margin-left: -7px;
    font-family: 'Open Sans', sans-serif;
    font-size: 17px;
    color: #fff;
}
.url span {
    color: #9aa0a6;
}
.extensions {
    height: 35px;
    display: flex;
    align-items: center;
    border: 1px solid #4f4f4f;
    border-radius: 18px;
}
.extensions span {
    width: 40px;
    height: 33px;
    display: flex;
    align-items: center;
    justify-content: center;
}
.extensions .on {
    background: radial-gradient(circle, #5b5b5b 16px, transparent 17px);
}
.avatar {
    width: 28px;
    height: 28px;
    margin: 0 6px;
    border-radius: 14px;
    background-color: #78909c;
    font-size: 16px;
    line-height: 28px;
    text-align: center;
}
.bookmarks {
    height: 45px;
    display: flex;
    align-items: center;
    gap: 21px;
    padding: 0 20px 0 18px;
    font-size: 14px;
    color: #f1f1f1;
}
.bookmarks a {
    display: flex;
    align-items: center;
    gap: 10px;
    white-space: nowrap;
}
.bookmarks .last {
    margin-left: auto;
    margin-right: 162px;
}
.bookmarks button {
    font-size: 20px;
}

/* forum page */
.viewport {
    flex: 1;
    min-height: 0;
    display: flex;
    overflow: hidden;
    background-color: #191b1c;
}
.page {
    flex: 1;
    font-family: 'DejaVu Sans', Verdana, sans-serif;
}
.site-header {
    max-width: 2344px;
    height: 141px;
    margin: 0 auto;
    display: flex;
    align-items: flex-start;
    border-bottom: 13px solid #2f6089;
    background-color: #1b1d1e;
}
.logo {
    width: 403px;
    padding: 58px 0 0 27px;
    font-size: 57px;
    line-height: 60px;
    font-weight: bold;
    color: #fff;
    -webkit-text-stroke: 2px #fff;
    text-shadow: 0 0 4px #000, 0 3px 3px #000;
}
.site-header nav {
    display: flex;
    gap: 88px;
    padding: 82px 101px 0 26px;
    font-size: 24px;
    line-height: 34px;
    font-weight: bold;
    color: #dddad5;
}
.site-header input {
    width: 360px;
    height: 38px;
    margin-top: 71px;
    border: none;
    border-radius: 6px;
    background-color: #222426;
}
.content {
    max-width: 2266px;
    margin: 0 auto;
    padding-top: 41px;
}
.title-row {
    display: flex;
    justify-content: space-between;
    align-items: baseline;
    padding-right: 176px;
    line-height: 52px;
    font-size: 26px;
}
.title-row h1 {
    font-size: 44px;
    color: #72a3cc;
}
.nav-row {
    display: flex;
    justify-content: space-between;
    margin-top: 27px;
    padding: 0 43px 0 8px;
    line-height: 30px;
    font-weight: bold;
}
.nav-left {
    display: flex;
    gap: 18px;
    font-size: 23px;
}
.nav-left .split {
    margin-left: 9px;
}
.nav-right {
    display: flex;
    gap: 20px;
    font-size: 20px;
}
.nav-right .menu {
    margin: 0 6px;
}
.nav-right .menu::after {
    content: "";
    display: inline-block;
    border: 7px solid transparent;
    border-top: 9px solid #e8e6e3;
    border-bottom: none;
    margin-bottom: 2px;
}
.breadcrumb {
    display: flex;
    align-items: center;
    gap: 6px;
    margin-top: 90px;
    font-size: 26px;
    line-height: 41px;
}
.breadcrumb a, .breadcrumb span {
    padding: 0 9px;
    border: 1px solid #2c2f31;
    border-radius: 5px;
}
.breadcrumb span {
    padding-right: 20px;
}
.breadcrumb i {
    display: flex;
    gap: 5px;
}
.intro {
    margin-top: 11px;
    font-size: 23px;
    line-height: 30px;
    color: #b5aea5;
}
.intro a {
    color: #e8e6e3;
}
h2 {
    margin: 7px 19px 5px;
    font-size: 22px;
    line-height: 30px;
}
h2.extra {
    margin-top: 52px;
}
.panel {
    background-color: #232526;
}
.row {
    display: flex;
    padding: 10px 19px 10px;
    border-bottom: 1px solid #3d4143;
    font-size: 26px;
    line-height: 32px;
}
.field {
    flex: none;
    width: 1240px;
}
.row label {
    display: block;
}
.field input {
    display: block;
    width: 100%;
    height: 43px;
    margin-top: 3px;
    padding: 0 7px;
    border: 1px solid #4c5153;
    background-color: #191b1c;
    color: #e8e6e3;
    font: 23px 'DejaVu Sans', Verdana, sans-serif;
}
.hint {
    margin: 33px 0 0 52px;
    font-size: 21px;
    line-height: 26px;
    color: #b5aea5;
    white-space: nowrap;
}
.editor {
    display: block;
    border-bottom: none;
}
.editor em {
    font-style: normal;
    color: #b5aea5;
}
.tools {
    display: flex;
    justify-content: space-between;
    margin: 34px 17px 22px 7px;
}
.tool-row {
    display: flex;
    align-items: center;
    height: 37px;
    margin-bottom: 10px;
}
.tool-row + .tool-row {
    margin-bottom: 0;
}
.tool-row i {
    width: 2px;
    height: 37px;
    margin-right: 1px;
    background-color: #bdbab4;
}
.tool-row button {
    width: 50px;
    height: 37px;
    display: flex;
    align-items: center;
    justify-content: center;
}
.tool-row select {
    height: 37px;
    margin: 0 4px 0 3px;
    padding: 0 7px;
    appearance: none;
    border: 1px solid #36393b;
    border-radius: 0;
    color: #e8e6e3;
    font: 19px 'Noto Sans', sans-serif;
    background-color: #191b1c;
    background-image: linear-gradient(#7d7d7d, #7d7d7d), conic-gradient(from 145deg at 50% 0, #7d7d7d 70deg, transparent 0), conic-gradient(from -35deg at 50% 100%, #7d7d7d 70deg, transparent 0);
    background-repeat: no-repeat;
    background-size: 16px 2px, 14px 8px, 14px 8px;
    background-position: right 1px top 17px, right 2px top 8px, right 2px top 20px;
}
.tool-row .fonts {
    width: 193px;
}
.tool-row .sizes {
    width: 107px;
}
.tool-row .drop {
    width: 59px;
    margin: 0 4px 0 3px;
    justify-content: space-between;
    background-color: #1a1c1d;
}
.tool-row .letter {
    font: bold 26px 'Liberation Serif', serif;
    color: #1b1c2b;
}
.tool-row .it {
    font-style: italic;
}
.tool-row .un {
    text-decoration: underline;
}
.tool-row .dim {
    color: #1f2023;
}
.tool-row .upload {
    width: 160px;
    height: 28px;
    margin: 0 9px 0 15px;
    justify-content: flex-start;
    gap: 4px;
    border: 1px solid #6a6c6e;
    font: bold 17px 'DejaVu Sans Condensed', sans-serif;
    color: #4b4d4f;
    white-space: nowrap;
}
.tool-row .php span {
    width: 29px;
    height: 32px;
    background-color: #cfe2f7;
    color: #222;
    font: italic bold 13px/30px 'Liberation Sans', sans-serif;
    text-align: center;
}
.tool-row .strike {
    color: #08080a;
    font: bold 15px 'Liberation Sans', sans-serif;
    text-decoration: line-through;
}
.tools-side {
    display: flex;
    gap: 20px;
    padding-top: 8px;
}
.compose {
    display: flex;
    margin-right: 17px;
}
.text-box {
    position: relative;
    flex: 1;
    height: 390px;
}
.text-box textarea {
    display: block;
    width: 100%;
    height: 100%;
    padding: 8px 6px;
    border: 1px solid #4c5153;
    background-color: #191b1c;
    color: #e8e6e3;
    font: 23px/28px 'DejaVu Sans', Verdana, sans-serif;
    white-space: pre;
    overflow: hidden;
    resize: both;
}
/* red waves drawn over the textarea */
.spell {
    position: absolute;
    left: 7px;
    top: 9px;
    pointer-events: none;
}
.spell i {
    position: absolute;
    height: 4px;
    background: linear-gradient(45deg, transparent 40%, #e01010 40%, #e01010 60%, transparent 60%) 0 0 / 8px 4px, linear-gradient(-45deg, transparent 40%, #e01010 40%, #e01010 60%, transparent 60%) 4px 0 / 8px 4px;
}
.smilies {
    width: 148px;
    padding: 5px 0 5px 24px;
    display: flex;
    flex-direction: column;
    justify-content: space-between;
}
.smiley-grid {
    display: grid;
    grid-template-columns: repeat(3, 32px);
    gap: 15px 13px;
}
.smiley-grid circle {
    fill: #fbdc25;
    stroke: #1a1600;
}
.smiley-grid path {
    fill: none;
    stroke: #2b2203;
    stroke-width: 2;
}
.smiley-grid .soft circle {
    fill: #efc63a;
    stroke: #a89340;
}
.smiley-grid .orange circle {
    fill: #f7ab2e;
}
.smiley-grid .mad circle {
    fill: #d2300f;
}
.smiley-grid .red {
    fill: #d42a1b;
    stroke-width: 1;
}
.smiley-grid .white {
    fill: #fff;
    stroke-width: 1;
}
.smilies a {
    padding-left: 30px;
    font-size: 21px;
    line-height: 30px;
}
.actions {
    display: flex;
    justify-content: flex-end;
    gap: 10px;
    padding: 14px 19px 10px;
    background-color: #202425;
}
.actions button, .uploads button {
    height: 41px;
    padding: 0 11px;
    border: 1px solid #44494b;
    border-radius: 9px;
    background: linear-gradient(#0b0b0c, #1d2021);
    font-size: 22px;
    font-weight: bold;
}
.options {
    display: block;
    padding: 10px 19px 22px;
}
.options label {
    display: flex;
    gap: 12px;
    margin-top: 13px;
}
.options label:first-child {
    margin-top: 0;
}
.options p {
    padding-left: 38px;
    font-size: 21px;
    line-height: 26px;
    color: #b5aea5;
}
.options input {
    appearance: none;
    width: 22px;
    height: 22px;
    margin: 1px 0 0;
    border: 1px solid #858585;
    border-radius: 4px;
    background-color: #3b3b3b;
}
.options input:checked {
    border-color: #99c8ff;
    background: #99c8ff;
}
.options input:checked::before {
    content: "";
    display: block;
    width: 7px;
    height: 12px;
    margin: 1px 0 0 6px;
    border: solid #2d3033;
    border-width: 0 3px 3px 0;
    transform: rotate(40deg);
}
.uploads {
    padding-top: 10px;
    border-bottom: none;
}
.uploads button {
    height: 39px;
    padding: 0 8px;
    background: #0b0b0c;
}
.uploads .hint {
    margin-top: 1px;
}
.scrollbar {
    width: 19px;
    display: flex;
    flex-direction: column;
    align-items: center;
    justify-content: space-between;
    padding: 7px 0;
    background-color: #424242;
}
.scrollbar .thumb {
    width: 17px;
    height: 855px;
    margin: 6px 0 auto;
    background-color: #686868;
}

/* extension popup */
.popup {
    position: absolute;
    top: 93px;
    right: 251px;
    width: 375px;
    height: 300px;
    background-color: #fff;
    color: #222;
    box-shadow: 0 2px 8px rgba(0, 0, 0, 0.5);
}
.popup h3 {
    background-color: #29b6f6;
    color: #fff;
    font-size: 38px;
    font-weight: normal;
    line-height: 70px;
    text-align: center;
    box-shadow: 0 2px 4px rgba(0, 0, 0, 0.3);
}
.popup-body {
    padding: 12px 8px 12px 13px;
}
.caption {
    display: block;
    font-size: 19px;
    line-height: 28px;
    color: #f39a32;
}
.popup-body input[type="text"] {
    width: 100%;
    height: 48px;
    padding: 0;
    border: none;
    border-bottom: 1px solid #9e9e9e;
    color: #000;
    font: 19px 'Noto Sans', sans-serif;
}
.advanced {
    margin-top: 48px;
}
.batch {
    display: flex;
    align-items: center;
    gap: 20px;
    margin-top: 20px;
    font-size: 13px;
    line-height: 24px;
    color: #9e9e9e;
}
.batch input {
    appearance: none;
    width: 42px;
    height: 17px;
    margin: 0;
    border-radius: 9px;
    background-color: #9e9e9e;
}
.batch input::before {
    content: "";
    display: block;
    width: 24px;
    height: 24px;
    margin: -3px 0 0 -2px;
    border-radius: 50%;
    background-color: #f1f1f1;
    box-shadow: 0 2px 4px rgba(0, 0, 0, 0.4);
}

/* taskbar */
.taskbar {
    height: 50px;
    display: flex;
    background-color: #3b2812;
}
.start {
    width: 60px;
    display: flex;
    align-items: center;
    justify-content: center;
}
.search {
    width: 430px;
    display: flex;
    align-items: center;
    gap: 15px;
    padding-left: 14px;
    border: 1px solid #8b7355;
    background-color: #6a5033;
}
.search input {
    flex: 1;
    padding: 0;
    border: none;
    background: none;
    font: 18px 'Noto Sans', sans-serif;
}
.search input::placeholder {
    color: #e3dcd4;
}
.apps {
    display: flex;
}
.apps button {
    width: 62px;
    display: flex;
    align-items: center;
    justify-content: center;
}
.apps .open {
    background: linear-gradient(#fcd3a0, #fcd3a0) center bottom / 51px 3px no-repeat;
}
.apps .active {
    background: linear-gradient(#fcd3a0, #fcd3a0) center bottom / 62px 3px no-repeat, #9c590a;
}
.tray {
    margin-left: auto;
    display: flex;
    align-items: center;
    padding-right: 5px;
    color: #fff;
}
.weather {
    margin: 0 21px 0 12px;
    font-size: 17px;
}
.net {
    width: 28px;
    height: 50px;
    margin: 0 5px 0 8px;
    display: flex;
    align-items: center;
    justify-content: center;
    background-color: #4b3824;
}
.clock {
    margin: 0 27px 0 10px;
    display: flex;
    flex-direction: column;
    font-size: 14px;
    line-height: 23px;
    text-align: center;
}
.notes {
    position: relative;
    width: 46px;
    height: 50px;
    padding-top: 16px;
    border-right: 1px solid #8b7355;
}
.notes b {
    position: absolute;
    left: 10px;
    top: 25px;
    width: 20px;
    height: 20px;
    border-radius: 10px;
    background-color: #8a4f08;
    font-size: 13px;
    line-height: 20px;
    text-align: center;
}
```
FILE: script.js
```
// open tabs, "name*count"
const tabs = {
    'tabs-a': 'yt*10 g yt globe yt*2',
    'tabs-b': 'yt*9 sketch yt*5 trash g n trash drive yt ud*7 yt tv ay bz yt*2 g rd yt*5 tb yt*2 g pp g flag g*3 globe dia g yt*3 ud*2 x*3 ud none globe so v*4',
    'tabs-c': 'v gh user photo g*5 pink ud*2 yt ud*9 s ud*3 globe bz p g globe g*2 game yt ott yh yt ti user amz'
};

for (const id in tabs) {
    let html = '';
    tabs[id].split(' ').forEach(entry => {
        const [name, count] = entry.split('*');
        for (let i = 0; i < (count || 1); i++) {
            html += '<div class="tab"><svg width="16" height="20" viewBox="2 0 16 20"><use href="#i-' + name + '" width="20" height="20"/></svg></div>';
        }
    });
    document.getElementById(id).innerHTML = html;
}

// mark the words that are not in the dictionary
const message = document.getElementById('message');
const spell = document.getElementById('spell');
const ctx = document.createElement('canvas').getContext('2d');
const style = getComputedStyle(message);
const lineHeight = parseInt(style.lineHeight);
ctx.font = style.fontSize + ' ' + style.fontFamily;

message.value.split('\n').forEach((line, row) => {
    for (const word of line.matchAll(/\bss\b|device_private_key|\bdevs\b/g)) {
        const mark = document.createElement('i');
        mark.style.left = Math.round(ctx.measureText(line.slice(0, word.index)).width) + 'px';
        mark.style.top = (row + 1) * lineHeight - 4 + 'px';
        mark.style.width = Math.round(ctx.measureText(word[0]).width) + 'px';
        spell.appendChild(mark);
    }
});
```
